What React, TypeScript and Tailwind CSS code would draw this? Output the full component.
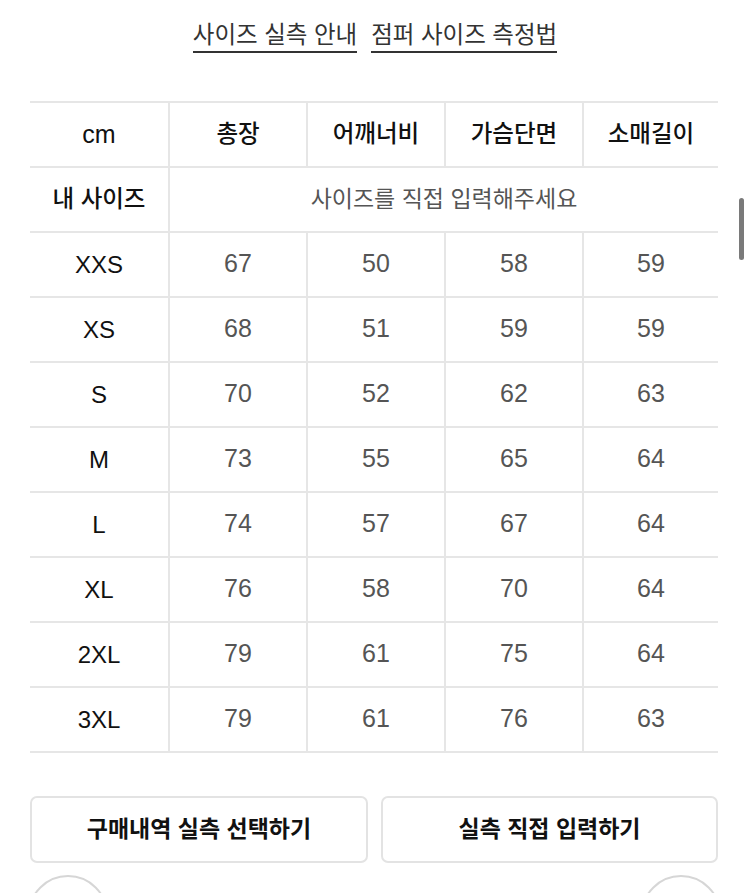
import React from "react";

const rows: [string, number, number, number, number][] = [
  ["XXS", 67, 50, 58, 59],
  ["XS", 68, 51, 59, 59],
  ["S", 70, 52, 62, 63],
  ["M", 73, 55, 65, 64],
  ["L", 74, 57, 67, 64],
  ["XL", 76, 58, 70, 64],
  ["2XL", 79, 61, 75, 64],
  ["3XL", 79, 61, 76, 63],
];

const headers = ["총장", "어깨너비", "가슴단면", "소매길이"];

export default function App() {
  return (
    <div
      className="relative w-[750px] h-[893px] overflow-hidden bg-white"
      style={{ fontFamily: '"Liberation Sans", "Noto Sans CJK KR", sans-serif' }}
    >
      <div className="flex justify-center gap-[14px] pt-[20px] text-[23.5px] leading-[31px] text-[#333]">
        <span className="border-b-2 border-[#333]">사이즈 실측 안내</span>
        <span className="border-b-2 border-[#333]">점퍼 사이즈 측정법</span>
      </div>

      <div className="ml-[30px] mt-[48px] w-[688px] border-t-2 border-[#e6e6e6] grid grid-cols-[138px_138px_138px_138px_136px]">
        <div className="h-[65px] flex items-center justify-center border-b-2 border-[#e6e6e6] text-[25px] text-[#111]">cm</div>
        {headers.map((h) => (
          <div key={h} className="h-[65px] flex items-center justify-center border-b-2 border-l-2 border-[#e6e6e6] text-[23.5px] font-medium text-[#111]">
            {h}
          </div>
        ))}
        <div className="h-[65px] flex items-center justify-center border-b-2 border-[#e6e6e6] text-[23.5px] font-medium text-[#111]">내 사이즈</div>
        <div className="col-span-4 h-[65px] flex items-center justify-center border-b-2 border-l-2 border-[#e6e6e6] text-[23px] text-[#555]">
          사이즈를 직접 입력해주세요
        </div>
        {rows.map((r) => (
          <React.Fragment key={r[0]}>
            <div className="h-[65px] flex items-center justify-center border-b-2 border-[#e6e6e6] text-[24px] text-[#111]">{r[0]}</div>
            {r.slice(1).map((v, i) => (
              <div key={i} className="h-[65px] flex items-center justify-center pb-[2px] border-b-2 border-l-2 border-[#e6e6e6] text-[25px] text-[#555]">
                {v}
              </div>
            ))}
          </React.Fragment>
        ))}
      </div>

      <div className="ml-[30px] mt-[43px] w-[688px] flex gap-[13px]">
        <button className="w-[338px] h-[67px] rounded-[7px] border-2 border-[#e3e3e3] text-[23px] font-bold text-[#111]">
          구매내역 실측 선택하기
        </button>
        <button className="w-[337px] h-[67px] rounded-[7px] border-2 border-[#e3e3e3] text-[23px] font-bold text-[#111]">
          실측 직접 입력하기
        </button>
      </div>

      <div className="flex justify-between ml-[28px] mr-[29px] mt-[12px]">
        <div className="w-[80px] h-[80px] rounded-full border-2 border-[#d6d6d6]" />
        <div className="w-[80px] h-[80px] rounded-full border-2 border-[#d6d6d6]" />
      </div>

      <div className="absolute left-[739px] top-[198px] w-[5px] h-[62px] rounded-full bg-[#7a7a7a]" />
    </div>
  );
}
